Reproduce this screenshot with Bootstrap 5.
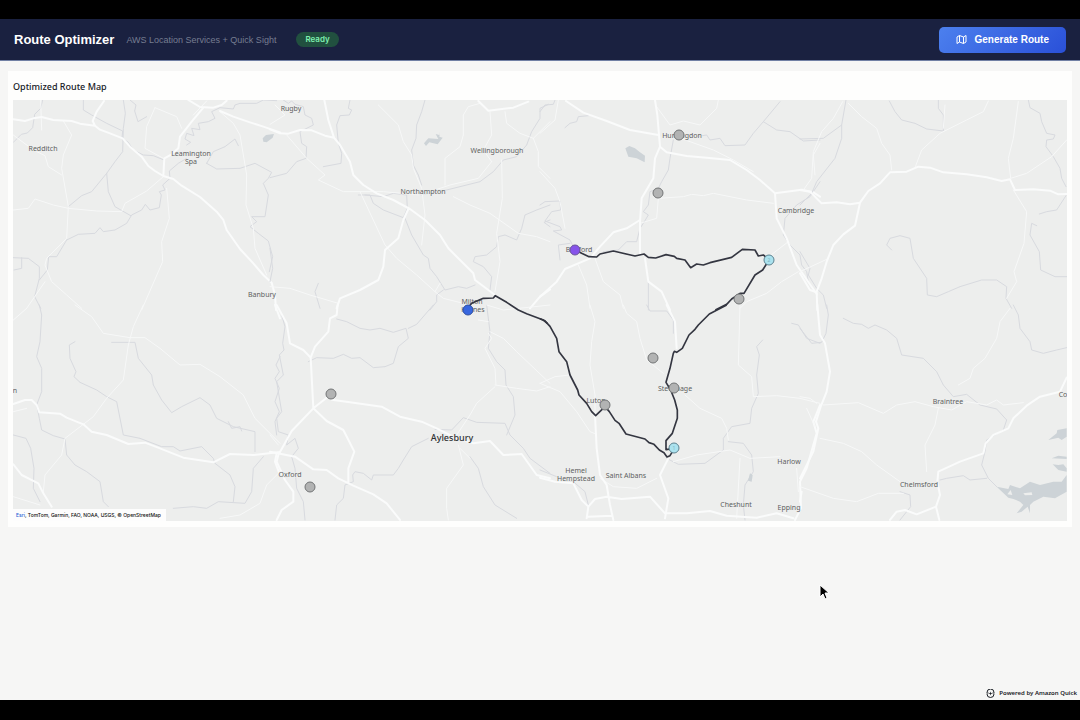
<!DOCTYPE html>
<html lang="en">
<head>
<meta charset="utf-8">
<meta name="viewport" content="width=device-width, initial-scale=1">
<title>Route Optimizer</title>
<link href="https://cdn.jsdelivr.net/npm/bootstrap@5.3.0/dist/css/bootstrap.min.css" rel="stylesheet">
<style>
  body { background: #f6f6f5; font-family: Inter, sans-serif; color: #16191f; }
  .bezel { height: 19px; background: #000; }
  .bezel-end { height: 20px; }
  .app-bar { background: #1a2140; height: 42px; border-bottom: 1px solid #7180a4; padding: 0 14px; }
  .app-title { font: 700 13px/20px "Liberation Sans", sans-serif; color: #fff; }
  .app-sub { font: 9px/16px "Liberation Sans", sans-serif; color: #767d90; }
  .status-pill { font-size: 8px; line-height: 15px; font-weight: 600; color: #7ff0b0; background: #21503f; border-radius: 8px; padding: 0 9px; }
  .btn-route { font: 700 10px/16px "Liberation Sans", sans-serif; color: #fff; background: linear-gradient(135deg, #4c80ee, #2a50d8); border: 0; border-radius: 5px; padding: 5px 17px; }
  .btn-route:hover { color: #fff; }
  .map-card { background: #fefefd; margin: 10px 8px 0; padding: 6px 5px; }
  .map-title { font: 500 9px/20px "Noto Sans", sans-serif; color: #16191f; margin: 0; padding-bottom: 3px; }
  .map-frame { background: #edeeed; }
  .map-frame svg { display: block; width: 100%; height: auto; }
  .credit { left: 0; bottom: 0; background: #fdfdfd; font: 500 5px/12px Inter, sans-serif; color: #111; padding: 0 5px 0 3px; }
  .credit a { color: #2c62d6; text-decoration: none; }
  .tile path { fill: none; vector-effect: non-scaling-stroke; stroke-linejoin: round; stroke-linecap: round; }
  .tile .water { stroke: #d8dadf; stroke-width: 1px; }
  .tile .minor { stroke: #f7f8f8; stroke-width: 1px; }
  .tile .major { stroke: #fafbfb; stroke-width: 2px; }
  .tile .lake { fill: #cdd3d7; }
  .tile .island { fill: #edeeed; }
  .route path { fill: none; stroke: #343641; stroke-width: 5px; stroke-linejoin: round; }
  .town text { font: 7px "Noto Sans", sans-serif; fill: #5d5f61; text-anchor: middle; stroke: #edeeed; stroke-width: 1px; paint-order: stroke; }
  .town .big { font-size: 9px; font-weight: 500; fill: #303234; }
  .stop circle { fill: #b2b3b3; stroke: #737576; stroke-width: 1px; }
  .stop .start { fill: #3867df; stroke: #2f4e9e; }
  .stop .finish { fill: #8653ea; stroke: #6a5598; }
  .stop .drop { fill: #abe2ee; stroke: #5d8290; }
  .stop text { font: 5px "Noto Sans", sans-serif; fill: #7fb6c4; text-anchor: middle; }
  .powered { font: 600 6px/12px "Noto Sans", sans-serif; padding: 0 3px 1px; }
  .pointer { position: fixed; left: 818px; top: 583px; }
</style>
</head>
<body class="min-vh-100 d-flex flex-column">
<div class="bezel"></div>
<header class="app-bar d-flex align-items-center justify-content-between">
  <div class="d-flex align-items-center">
    <h1 class="app-title mb-0 me-2">Route Optimizer</h1>
    <span class="app-sub mx-1">AWS Location Services + Quick Sight</span>
    <span class="status-pill ms-3">Ready</span>
  </div>
  <button type="button" class="btn btn-route d-flex align-items-center gap-1">
    <svg class="me-1" width="11" height="9" viewBox="0 0 22 18" fill="none" stroke="#fff" stroke-width="2" stroke-linejoin="round" aria-hidden="true"><path d="M2 4 7 1l8 3 5-3v13l-5 3-8-3-5 3zM7 1v13M15 4v13"/></svg>
    Generate Route
  </button>
</header>
<main class="flex-grow-1">
<section class="map-card">
<h2 class="map-title">Optimized Route Map</h2>
<div class="map-frame position-relative">
<svg viewBox="13 100 1054 421" role="img" aria-label="Map of the optimized route">
<!-- north-west -->
<g class="tile" transform="translate(0 95) scale(.33333)">
<path class="water" d="M128 15 122 40 104 58 98 98 82 114 64 118 40 142M250 15V45L275 60 320 85 368 108 366 130 385 142 400 165 430 180 460 182 492 195M370 15 376 55 370 100 368 170 345 200 320 235 275 290 245 302 205 335M320 235 325 290 345 335 392 362M390 15 408 30 404 48 414 80 440 65M200 435 235 418 285 415 300 398 310 410 345 405 380 385 395 360 425 345 436 328 450 345 478 338 484 300 478 290 495 285 488 270 510 250 508 228 535 205 560 190M560 150 572 142 555 132 560 115 582 122 575 100 600 104 595 85 625 80 645 70 635 50 660 38 700 42 705 30 720 25 770 25 790 15 830 17M620 205 640 170 675 155 705 132 715 152M620 205 650 222 720 220 765 205 815 232 805 250 790 265 805 300 795 365 755 365 770 380 750 395 775 415 805 438 818 485 808 530M40 488 85 490 118 515 118 550 104 605 122 640M65 488 65 520 42 525M200 435 170 485 146 485 142 525 118 555"/>
<path class="minor" d="M122 15 125 105M190 78 215 120 190 180 185 220 205 335 200 430 140 490 135 510 155 560 200 600 245 640M40 120 100 165 135 182 145 215 185 240M40 345 85 340 105 312 160 330 205 340 290 348 365 350 375 325 440 288 490 245M465 38 440 95 435 160 490 190M465 38 530 65 545 100M500 280 508 370 485 440 488 500 425 645M620 18 580 60M660 50 700 85 720 120 740 240 738 330 760 400 765 460 800 540M135 560 80 640"/>
<path class="major" d="M40 73 75 78 100 70 125 66 160 75 215 78 240 86 285 92 300 104 330 115 368 130 390 155 425 185 445 213 465 228 490 243 520 252 545 272 600 306 650 350 670 375 680 405 720 462 760 505 790 540 815 563 825 600 828 645M285 92 278 78 290 50 312 18M490 243 493 190 515 178 535 160 540 125 575 80 610 38M565 15 600 36 640 38 665 30 680 17M660 48 700 65 750 82 790 95 840 112"/>
<path class="lake" d="M788 130 798 120 822 117 818 128 800 142 790 140Z"/>
</g>
<!-- Northampton -->
<g class="tile" transform="translate(270 95) scale(.33333)">
<path class="water" d="M40 15 55 25 65 18 75 28 100 35 105 60 125 70 130 90 90 110 95 145 110 155 108 190 80 200 50 235 0 248M240 15 235 40 245 45 238 60 210 62 200 90 205 145 215 175 213 205 160 215M465 15 455 50 440 90 438 130 425 165 430 210 445 240 455 270M265 300 300 300 310 325 340 345 400 368 412 340 410 300 370 295 340 305 285 300M405 370 425 420 460 480 475 490 480 520 500 545 525 585 565 575 590 580 615 570M835 28 810 40 810 70 785 110 770 150 740 185 700 195 670 230 630 260 530 285 450 300M660 585 665 545 640 515 610 500 615 485 650 480 680 455 685 425 705 420 740 435 755 400 765 360 800 345 840 330M840 375 822 382 840 395M145 565 135 590 150 640M520 585 500 600 500 620 480 645M0 460 8 520 0 560"/>
<path class="minor" d="M0 88 45 60 15 30M325 30 385 90 400 140 425 180 430 220 455 280 465 360 455 450M580 120 580 60 595 35 630 25M580 120 570 155 525 190 525 270M660 50 665 120 640 165 665 200M705 50 710 85 750 115 790 130 840 80M790 130 805 170 805 215 840 250M695 195 697 310 680 415 690 500 675 590M665 200 625 250 540 270 450 300 340 290 220 290 145 255 165 240 110 190 50 120M270 290 345 450 380 490 440 540 495 590 520 610 580 625M550 305 600 330 660 355 745 415 800 425 840 440M0 575 60 580 120 600 205 625M495 590 510 565"/>
<path class="major" d="M30 115 0 103M30 115 55 116 90 105 125 106 165 122 192 128 210 150 240 200 250 240 280 270 320 295 370 315 420 342 465 375 510 420 535 460 610 535 615 555 675 600M163 15 175 75 192 128M415 342 400 375 385 430 345 465 340 515 325 555 270 585 210 610 200 640M625 18 655 47 730 38 775 20M780 640 810 605 840 583"/>
<path class="lake" d="M462 145 475 130 505 132 497 117 508 120 510 110 508 125 518 128 503 148 478 142 468 153Z"/>
</g>
<!-- Bedford, Huntingdon and Cambridge -->
<g class="tile" transform="translate(540 95) scale(.33333)">
<path class="water" d="M0 50 15 30 40 28 45 15M75 98 90 85 110 80 115 65 145 62M0 330 15 320 60 318 62 345 35 350 15 378 60 395 65 405 40 408 90 435 100 455M60 495 55 450 90 445M720 20 670 80 640 115 615 150 555 152 540 130 510 135 500 120 470 125M670 80 710 105 750 110 790 138 840 135M400 135 390 190 385 225 365 260 355 280 330 290 325 330 310 350 325 360 310 385 300 400 290 440 260 440 235 465 190 470M840 260 810 305 770 330 735 370 730 420 750 450 780 480 785 510 800 530 805 560 825 590M325 560 325 645"/>
<path class="minor" d="M55 15 45 75 0 115M350 35 390 90 430 78 480 90 530 40 535 15M390 120 450 140 520 165 580 195 640 230M355 310 430 305 455 298 490 302 520 295 620 315 700 325M355 310 350 370 300 385M0 230 45 280 60 320 75 400M115 510 140 570 150 640M165 490 190 560 240 600 250 640M745 440 680 490M775 530 725 560 680 595 620 620 600 640M840 145 820 180 825 240"/>
<path class="major" d="M78 18 130 53 200 78 270 105 355 120M345 15 352 60 360 155 345 190 340 250 305 310 300 380 300 475M360 155 380 172 440 183 500 188 570 195 620 225 660 255 705 295 710 370 740 430 770 510 830 597M705 295 785 284 820 292 840 305M300 375 260 400 220 412 180 455 150 490 75 522 50 560 0 605M315 490 325 560 365 590 390 645"/>
<path class="lake" d="M256 160 268 153 285 160 300 172 315 182 314 202 290 190 265 185Z"/>
</g>
<!-- Suffolk border -->
<g class="tile" transform="translate(800 95) scale(.33333)">
<path class="water" d="M138 15 125 90 125 130 105 190 50 260 35 295 0 330M125 90 70 130 0 132M268 18 285 50 305 75 345 85 380 102 430 108 430 60 415 40 415 15M685 15 690 38 720 55 725 80 740 115 765 120 760 132 740 135 738 155 760 185 780 220 785 250 798 275M798 302 770 345 740 350 718 357M710 392 695 385 690 420 718 470 722 525 765 545 800 545M275 465 260 450 270 430 300 422 330 430 340 490 380 550 382 600 410 605 445 590 480 575 545 555 590 555 620 575 618 610 635 640M0 470 30 520 25 540 50 580 70 600 80 640"/>
<path class="minor" d="M128 20 100 70 65 110 40 170 35 250 10 285M145 25 185 65 230 100 245 145 270 180 275 225M435 30 430 100M345 218 365 165 420 115 500 75 550 50 565 18M655 20 640 130 625 190 632 250 680 235 755 185 800 135M640 285 680 350 672 445 642 530 650 560 620 610M80 493 0 530"/>
<path class="major" d="M0 285 30 290 65 325 110 322 150 328 180 323 205 288 240 265 270 232 320 230 355 215 390 218 430 232 500 238 560 247 605 258 630 253 645 285 700 283 750 287 775 298 800 297M180 323 165 392 130 418 100 450 80 500 65 550 50 590 52 645M0 535 30 585 50 592"/>
</g>
<!-- Vale of Evesham to Oxford -->
<g class="tile" transform="translate(0 305) scale(.33333)">
<path class="water" d="M118 0 125 30 120 110 110 155 125 190 125 260 110 300 118 340 125 375 160 392 195 402 200 450 225 480 260 500 300 530 310 590 325 605M225 110 208 120 210 160 228 200 222 215 240 232 290 255 320 275 350 290 370 390 420 400 485 425 520 425 540 438 605 425 640 460 645 475 690 510 705 545 700 590M335 112 405 112 415 160 455 210 460 240 485 285 515 323 545 305 600 278 630 300 650 340 700 365 765 380 765 440M685 350 695 370 720 365 725 378M40 390 78 400 92 430 102 490 100 550 120 590M520 610 580 605 620 610 655 590 735 595 755 560 760 490 790 455M840 155 828 180 838 200 825 220 838 250 825 290 838 320 825 350 830 390"/>
<path class="minor" d="M40 45 80 10M225 0 275 35 310 85 390 98 435 98 480 130 540 180 600 178 660 215 730 270 765 340 840 415M430 0 400 65 385 120 370 225 320 280 280 335 195 400 185 450 135 510 130 560M40 320 80 310M40 575 120 600M660 640 720 630 780 595 800 540 840 500"/>
<path class="major" d="M40 297 75 285 95 285 110 300 118 322 180 326 200 338 250 358 275 380 320 390 385 417 435 413 480 430 550 458 640 472 690 447 760 450 840 441M40 478 65 510 115 535 130 565 155 605M825 0 840 40M830 445 825 470 838 505"/>
</g>
<!-- Oxford to Aylesbury -->
<g class="tile" transform="translate(270 305) scale(.33333)">
<path class="water" d="M35 30 45 65 38 115 42 135 28 150 40 210 20 230 30 290 35 320 20 340 25 380 55 390 50 420 75 400 85 430 65 455 75 490 80 550 100 590 105 645M115 170 140 158 190 160 220 148 245 160 270 158 310 188 345 185 370 175 385 125 415 100 408 70 370 82 330 70 300 75 270 70 230 50 200 42M415 70 440 58 490 0M475 400 425 425 400 465 385 490 370 510 310 510 305 525 280 505 255 500 248 510 250 530 225 540 220 580 200 600 195 645M495 373 545 375 580 338 620 352 705 355 720 390 760 430 780 460 840 505M650 0 660 80 655 130 680 170 705 195 708 240 730 275 735 330 710 390M600 455 625 490 640 545 675 600 740 640"/>
<path class="minor" d="M660 80 700 100 740 140 840 235M675 240 740 250 800 258 840 245M675 245 620 295 600 330 560 390M565 420 580 480 530 550 530 610 535 645M0 390 25 420M625 45 655 50M840 0 700 15 650 0M570 430 600 460"/>
<path class="major" d="M20 0 50 55 60 115 100 135 122 158 130 310 170 348 220 375 253 440 235 490 235 530M203 0 200 30 180 40 175 80 135 125 122 158M170 278 130 310 65 378 25 450 20 470 45 525 70 560 70 590 35 615 20 645M0 440 75 455 130 493 170 495 205 520 250 542 310 568 350 595 390 645M185 284 240 292 335 305 390 335 455 350 500 370 560 400 610 415 660 408 700 450 755 447 800 510 840 520"/>
<path class="minor" d="M655 85 665 100 645 130 675 190 678 240"/>
</g>
<!-- Luton, Stevenage and Hertford -->
<g class="tile" transform="translate(540 305) scale(.33333)">
<path class="water" d="M0 495 50 515 100 530 135 560 145 600M380 460 415 478 495 475 550 435 550 400 575 365 630 355 635 310 655 265 650 210 658 150 650 125 668 105M565 410 610 415 635 450 640 500 615 540 610 600 615 645M320 0 330 18 380 18 400 45 400 85M755 55 775 60 800 100 840 115"/>
<path class="minor" d="M150 0 165 50 155 110 150 180 165 270 165 330M0 235 45 215 90 210 105 235M0 235 60 260 110 320 150 380 170 388M250 0 260 25 290 50 300 100 320 165 370 205M600 0 595 180 635 215 640 275 710 272 780 280 840 295M435 270 480 310 545 340 560 370 565 405M400 470 470 450 570 435 630 460 720 455M600 460 590 640M180 520 220 545 290 550 350 520M770 490 775 560"/>
<path class="major" d="M0 518 45 530 100 535 125 585 145 605 140 640M145 605 165 582 200 575 245 582 330 575 375 625 440 625 510 618 560 632 650 638 710 625 760 640M145 635 215 632M165 330 170 430 180 510 200 540 210 600 220 645M385 460 360 510 385 580 375 640M380 0 405 50 410 130M840 300 820 350 830 385 800 490 780 530 783 610 765 645"/>
<path class="lake" d="M630 505 638 510 635 530 624 527Z"/>
</g>
<!-- Essex -->
<g class="tile" transform="translate(800 305) scale(.33333)">
<path class="water" d="M80 0 85 30 78 85 65 112 35 115 0 70M130 40 160 55 185 58 205 70 225 60 260 75 290 100 305 150 370 160 410 200 430 240 460 275 500 268 540 300 590 312 620 345 610 375 560 405 555 440 545 480 565 520 590 545M420 525 440 520 490 512 510 525 560 520M640 0 655 30 660 70 690 110 695 135 730 145 770 135 800 128M300 560 330 570 332 605 300 645"/>
<path class="minor" d="M70 300 175 293 250 325 290 300 345 290 400 305 455 315 500 290 560 300 590 285 610 300 670 293M415 310 405 360 375 420 380 500M60 400 130 415 185 440 230 480 300 530M0 545 100 580 170 590 235 565 310 565M630 10 600 50 590 100 555 160 520 190 510 220 475 240M0 275 30 280 50 295M20 310 45 365"/>
<path class="major" d="M52 0 60 90 75 115 90 200 80 260 62 305 48 350 55 370 40 440 0 520M0 590 5 560M800 218 780 260 720 275 680 302 640 340 625 370 580 390 557 415 550 445 480 470 415 500 412 530 420 570 408 605 350 628 315 615 290 620 270 645M408 605 418 645"/>
<path class="lake" d="M590 545 625 552 630 540 660 550 690 530 720 540 760 530 785 530 800 510V560L765 580 730 575 700 590 690 600 690 625 683 605 665 620 650 625 670 600 660 590 640 582 625 578ZM745 405 770 385 772 375 800 370V395L785 405 775 398ZM755 460 775 452 800 455V462ZM758 478 775 480 790 478 800 490V500L775 495Z"/>
<path class="island" d="M670 565 695 562 697 570 675 571ZM622 568 632 555 637 570Z"/>
</g>
<g class="town">
<text x="43" y="151">Redditch</text><text x="191" y="156">Leamington</text><text x="191" y="164">Spa</text>
<text x="291" y="111">Rugby</text><text x="497" y="153">Wellingborough</text><text x="423" y="194">Northampton</text>
<text x="262" y="297">Banbury</text><text x="472" y="304">Milton</text><text x="473" y="312">Keynes</text>
<text x="682" y="138">Huntingdon</text><text x="796" y="213">Cambridge</text><text x="579" y="252">Bedford</text>
<text x="290" y="477">Oxford</text><text class="big" x="452" y="441">Aylesbury</text><text x="596" y="403">Luton</text>
<text x="675" y="391">Stevenage</text><text x="576" y="473">Hemel</text><text x="576" y="481">Hempstead</text>
<text x="626" y="478">Saint Albans</text><text x="736" y="507">Cheshunt</text><text x="789" y="464">Harlow</text>
<text x="789" y="510">Epping</text><text x="948" y="404">Braintree</text><text x="919" y="487">Chelmsford</text>
<text x="1063" y="397">Co</text><text x="15" y="393">n</text>
</g>
<!-- driving route, Milton Keynes to Bedford -->
<g class="route">
<g transform="translate(270 95) scale(.33333)"><path d="M593 640 605 625 640 610 670 609 676 602 710 622 745 645 770 656 820 675 832 685"/></g>
<g transform="translate(540 305) scale(.33333)"><path d="M0 41 14 47 30 64 50 100 57 140 80 170 90 210 113 255 117 270 140 295 155 320 167 332 195 305 208 320 225 346 237 355 258 387 315 402 327 413 342 418 358 435 372 443 381 456 390 452 403 430 378 434 378 407 397 385 412 340 412 315 404 285 392 255 378 232 390 190 400 145 403 139 410 142 427 130 447 90 465 73 475 60 508 27 560 0"/></g>
<g transform="translate(540 95) scale(.33333)"><path d="M526 645 560 628 575 612 600 595 612 595 645 540 668 525 687 495 670 480 655 483 645 465 607 463 575 487 510 503 490 510 470 507 452 518 435 495 410 490 403 484 378 479 347 489 325 487 312 477 285 483 220 468 180 477 170 486 147 485 125 475 105 465"/></g>
</g>
<g class="stop">
<circle cx="679" cy="135" r="5"/><circle cx="658" cy="193" r="5"/><circle cx="739" cy="299" r="5"/><circle cx="653" cy="358" r="5"/>
<circle cx="674" cy="388" r="5"/><circle cx="605" cy="405" r="5"/><circle cx="331" cy="394" r="5"/><circle cx="310" cy="487" r="5"/>
<circle class="start" cx="468" cy="310" r="5"/><circle class="finish" cx="575" cy="250" r="5"/>
<circle class="drop" cx="769" cy="260" r="5"/><circle class="drop" cx="674" cy="448" r="5"/>
<text x="769" y="262">2</text><text x="674" y="450">1</text>
</g>
</svg>
<div class="credit position-absolute"><a href="#">Esri</a>, TomTom, Garmin, FAO, NOAA, USGS, © OpenStreetMap</div>
</div>
</section>
</main>
<footer class="powered d-flex justify-content-end align-items-center">
  <svg class="me-1" width="9" height="9" viewBox="0 0 18 18" fill="none" stroke="#1c2026" stroke-width="2" aria-hidden="true"><path d="M2 7a7 7 0 0 1 14 0M16 10a7 7 0 0 1-14 0M1 8h4M13 8h4"/><path d="m9 5 1 3 3 1-3 1-1 3-1-3-3-1 3-1Z" fill="#1c2026" stroke="none"/></svg>
  Powered by Amazon Quick
</footer>
<div class="bezel bezel-end"></div>
<svg class="pointer" width="12" height="18" viewBox="0 0 12 18" aria-hidden="true"><path d="M2 2v12l3-3 2 5 2-1-2-5h4Z" fill="#000" stroke="#fff" stroke-width="1"/></svg>
<script src="https://cdn.jsdelivr.net/npm/bootstrap@5.3.0/dist/js/bootstrap.bundle.min.js"></script>
</body>
</html>
